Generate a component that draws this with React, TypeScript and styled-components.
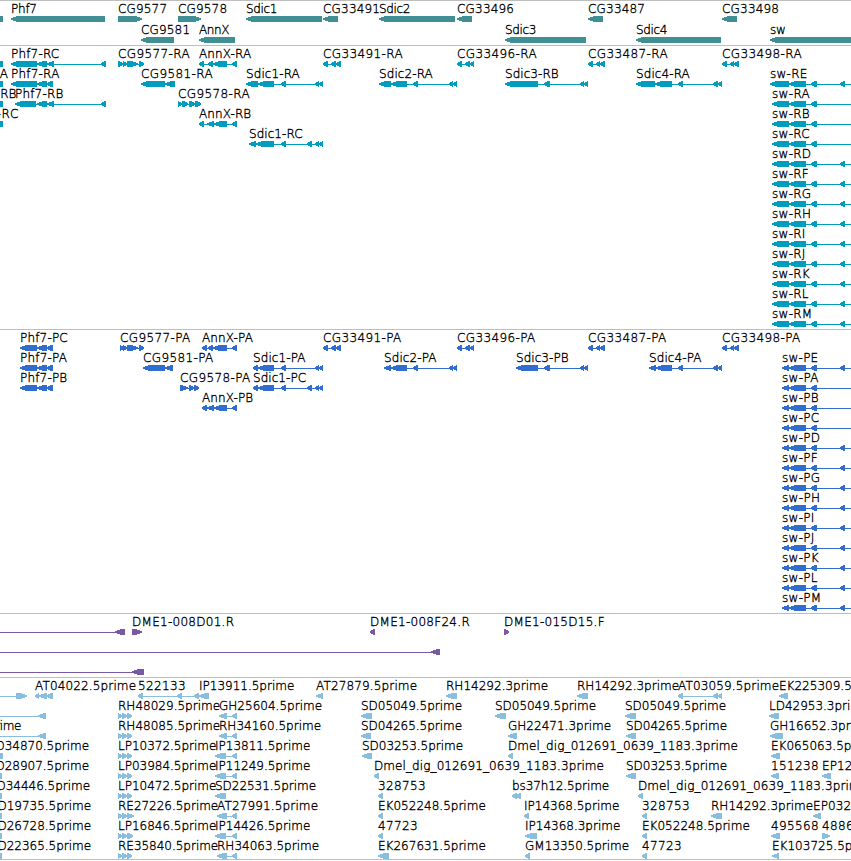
import React from "react";
import styled, { createGlobalStyle } from "styled-components";

const PageStyle = createGlobalStyle`
  html, body { margin: 0; padding: 0; background: #fff; overflow: hidden; }
`;

type Direction = "left" | "right";
type Span = [number, number];

interface Feature {
  label?: string;
  x: number;
  spans: Span[];
  dir?: Direction;
  /** x at which the label ends, for labels cut by the left edge */
  labelEnd?: number;
  lineFrom?: number;
  lineTo?: number;
}

interface TrackData {
  color: string;
  height: number;
  rowHeight: number;
  rows: Feature[][];
}

const Browser = styled.main`
  width: 851px;
  height: 861px;
  overflow: hidden;
  background: #fff;
  display: flex;
  flex-direction: column;
`;

const Track = styled.section<{ $height: number }>`
  box-sizing: border-box;
  flex: none;
  height: ${(p) => p.$height}px;
  border-top: 1px solid #bebebe;
`;

const Row = styled.div<{ $height: number }>`
  position: relative;
  height: ${(p) => p.$height}px;
`;

const Label = styled.span<{ $x: number; $end?: number; $spacing: number }>`
  position: absolute;
  top: 1px;
  ${(p) => (p.$end !== undefined ? `right: ${851 - p.$end}px;` : `left: ${p.$x}px;`)}
  font: 200 12px/15px "DejaVu Sans", sans-serif;
  letter-spacing: ${(p) => p.$spacing.toFixed(3)}px;
  -webkit-text-stroke: 0.35px #000;
  color: #000;
  white-space: nowrap;
`;

const Glyphs = styled.svg`
  position: absolute;
  left: 0;
  top: 15px;
  display: block;
`;

const f = (label: string, spans: Span[], extra: Partial<Feature> = {}): Feature => ({
  label,
  x: spans[0][0],
  spans,
  ...extra,
});
const bare = (spans: Span[], extra: Partial<Feature> = {}): Feature => ({ x: spans[0][0], spans, ...extra });
const cut = (label: string, labelEnd: number, edge: number): Feature => ({
  label,
  labelEnd,
  x: -20,
  spans: [[-20, edge]],
});
const right = { dir: "right" as Direction };

/* Width correction of each character, in pixels, averaged over a label. */
const adjustments: [RegExp, number][] = [
  [/[0-9]/, 0.37],
  [/\./, 0.19],
  [/-/, 2.67],
  [/_/, 0.6],
  [/T/, 1.6],
  [/[hndpgbcmS]/, -0.6],
  [/[fEe]/, -0.45],
  [/w/, -0.5],
  [/[il]/, -0.33],
  [/[rHA]/, 0],
];
const spacingOf = (label: string) => {
  const total = [...label].reduce((sum, ch) => {
    const hit = adjustments.find(([re]) => re.test(ch));
    return sum + (hit ? hit[1] : -0.25);
  }, 0);
  return total / label.length;
};

/* Six-pixel-high block whose head narrows in steps to a point. */
const arrow = ([a, b]: Span, dir: Direction) => {
  const k = dir === "left" ? 1 : -1;
  const tip = dir === "left" ? a : b;
  const back = dir === "left" ? b : a;
  const w = b - a;
  const outer = tip + k * Math.min(w > 6 ? 5 : 3, w - 1);
  const inner = tip + k * (w > 6 ? 2 : 1);
  return `M${back} 0H${outer}V1H${inner}V2H${tip}V4H${inner}V5H${outer}V6H${back}Z`;
};

const sdic1: Span[] = [[258, 274], [281, 286]];
const end1: Span[] = [[315, 319], [319, 323]];
const sdic2: Span[] = [[391, 407], [413, 418], [449, 453], [453, 457]];
const sdic3: Span[] = [[544, 550], [580, 584], [584, 588]];
const sdic4: Span[] = [[678, 683], [713, 718], [718, 722]];
const phf7: Span[] = [[37, 47], [47, 53]];

const cgRow = (s: string): Feature[] => [
  f(`CG33491-${s}`, [[323, 328], [331, 336], [336, 341]]),
  f(`CG33496-${s}`, [[457, 462], [465, 470], [470, 474]]),
  f(`CG33487-${s}`, [[588, 593], [596, 600], [600, 605]]),
  f(`CG33498-${s}`, [[722, 727], [730, 734], [734, 739]]),
];

const shortIsoforms = "ABC";
const sw = (suffix: string, x: number) => {
  const spans: Span[] = [[x, 789], [789, 806], [811, 817]];
  if (!shortIsoforms.includes(suffix[1])) spans.push([840, 845]);
  return f(`sw-${suffix}`, spans, { lineTo: 851 });
};
const swLetters = "BCDFGHIJKLM".split("");

const genes: TrackData = {
  color: "#3f8f95",
  height: 45,
  rowHeight: 21,
  rows: [
    [
      bare([[-20, 3]]),
      f("Phf7", [[11, 105]]),
      f("CG9577", [[118, 142]], right),
      f("CG9578", [[178, 201]], right),
      f("Sdic1", [[246, 322]]),
      f("CG33491", [[323, 338]]),
      f("Sdic2", [[379, 455]]),
      f("CG33496", [[457, 472]]),
      f("CG33487", [[588, 603]]),
      f("CG33498", [[722, 737]]),
    ],
    [
      f("CG9581", [[141, 174]]),
      f("AnnX", [[199, 235]]),
      f("Sdic3", [[505, 586]]),
      f("Sdic4", [[636, 721]]),
      f("sw", [[770, 870]]),
    ],
  ],
};

const transcripts: TrackData = {
  color: "#009dbf",
  height: 284,
  rowHeight: 20,
  rows: [
    [
      bare([[-20, 3]]),
      f("Phf7-RC", [[11, 37], [37, 47], [47, 54], [101, 106]]),
      f("CG9577-RA", [[118, 123], [123, 127], [127, 138], [139, 144]], right),
      f("AnnX-RA", [[199, 204], [208, 213], [213, 227], [232, 237]]),
      ...cgRow("RA"),
    ],
    [
      cut("A", 8, 3),
      f("Phf7-RA", [[11, 37], ...phf7]),
      f("CG9581-RA", [[141, 165], [165, 175]]),
      f("Sdic1-RA", [[246, 258], ...sdic1, ...end1]),
      f("Sdic2-RA", [[379, 391], ...sdic2]),
      f("Sdic3-RB", [[505, 538], ...sdic3]),
      f("Sdic4-RA", [[636, 655], [655, 672], ...sdic4]),
      sw("RE", 770),
    ],
    [
      cut("RB", 16, 3),
      f("Phf7-RB", [[15, 36], [37, 47], [47, 54], [101, 106]]),
      f("CG9578-RA", [[178, 182], [182, 188], [189, 195], [195, 201]], right),
      sw("RA", 772),
    ],
    [
      cut("-RC", 19, 3),
      f("AnnX-RB", [[199, 204], [207, 214], [214, 227], [232, 237]]),
      sw("RB", 772),
    ],
    [f("Sdic1-RC", [[249, 256], [256, 274], [281, 286], [307, 312], ...end1]), sw("RC", 772)],
    ...swLetters.slice(2).map((c) => [sw(`R${c}`, 772)]),
  ],
};

const proteins: TrackData = {
  color: "#316dce",
  height: 284,
  rowHeight: 20,
  rows: [
    [
      f("Phf7-PC", [[20, 37], ...phf7]),
      f("CG9577-PA", [[120, 124], [123, 127], [127, 138], [139, 144]], right),
      f("AnnX-PA", [[202, 207], [208, 213], [213, 227], [232, 237]]),
      ...cgRow("PA"),
    ],
    [
      f("Phf7-PA", [[20, 37], ...phf7]),
      f("CG9581-PA", [[143, 165], [165, 173]]),
      f("Sdic1-PA", [[253, 258], ...sdic1, ...end1]),
      f("Sdic2-PA", [[384, 391], ...sdic2]),
      f("Sdic3-PB", [[516, 538], ...sdic3]),
      f("Sdic4-PA", [[649, 656], [656, 672], ...sdic4]),
      sw("PE", 782),
    ],
    [
      f("Phf7-PB", [[20, 37], ...phf7]),
      f("CG9578-PA", [[180, 188], [189, 194], [194, 199]], right),
      f("Sdic1-PC", [[253, 258], ...sdic1, [307, 312], ...end1]),
      sw("PA", 782),
    ],
    [f("AnnX-PB", [[202, 207], [207, 214], [214, 227], [232, 237]]), sw("PB", 782)],
    ...swLetters.slice(1).map((c) => [sw(`P${c}`, 782)]),
  ],
};

const clones: TrackData = {
  color: "#7759a6",
  height: 64,
  rowHeight: 20,
  rows: [
    [
      bare([[115, 125]], { lineFrom: 0 }),
      f("DME1-008D01.R", [[132, 142]], right),
      f("DME1-008F24.R", [[370, 375]]),
      f("DME1-015D15.F", [[504, 509]], right),
    ],
    [bare([[431, 440]], { lineFrom: 0 })],
    [bare([[132, 144]], { lineFrom: 0 })],
  ],
};

const triple = (label: string, end = 132) =>
  f(label, [[118, 122], [122, 127], [127, end]], right);
const pair = (label: string, a: number, b: number) => f(label, [[a, b], [232, 237]]);
const longName = "Dmel_dig_012691_0639_1183.3prime";

const ests: TrackData = {
  color: "#8abedf",
  height: 182,
  rowHeight: 20,
  rows: [
    [
      bare([[16, 27]], { dir: "right", lineFrom: 0 }),
      f("AT04022.5prime", [[35, 39], [39, 47], [47, 53]]),
      f("522133", [[138, 143], [177, 182], [194, 199]]),
      f("IP13911.5prime", [[199, 209]]),
      f("AT27879.5prime", [[316, 323]]),
      f("RH14292.3prime", [[446, 457]]),
      f("RH14292.3prime", [[577, 588]]),
      f("AT03059.5prime", [[678, 683], [713, 718], [718, 722]]),
      f("EK225309.5prime", [[779, 788]]),
    ],
    [
      bare([[38, 46]], { lineFrom: 0 }),
      triple("RH48029.5prime"),
      pair("GH25604.5prime", 219, 227),
      f("SD05049.5prime", [[361, 372]]),
      f("SD05049.5prime", [[495, 506]]),
      f("SD05049.5prime", [[625, 636]]),
      f("LD42953.3prime", [[769, 779]]),
    ],
    [
      f("prime", [[38, 46]], { lineFrom: 0, labelEnd: 21 }),
      triple("RH48085.5prime"),
      pair("RH34160.5prime", 219, 227),
      f("SD04265.5prime", [[361, 371]]),
      f("GH22471.3prime", [[508, 517]]),
      f("SD04265.5prime", [[626, 636]]),
      f("GH16652.3prime", [[770, 783]]),
    ],
    [
      cut("SD34870.5prime", 89, 3),
      triple("LP10372.5prime"),
      pair("IP13811.5prime", 215, 226),
      f("SD03253.5prime", [[362, 372]]),
      f(longName, [[508, 513]]),
      f("EK065063.5prime", [[771, 780]]),
    ],
    [
      cut("SD28907.5prime", 89, 2),
      triple("LP03984.5prime"),
      pair("IP11249.5prime", 215, 226),
      f(longName, [[374, 379]]),
      f("SD03253.5prime", [[626, 636]]),
      f("151238", [[771, 779]]),
      f("EP1232", [[822, 831]]),
    ],
    [
      cut("SD34446.5prime", 90, 2),
      triple("LP10472.5prime"),
      f("SD22531.5prime", [[215, 226]]),
      f("328753", [[378, 383]]),
      f("bs37h12.5prime", [[512, 517], [516, 521]]),
      f(longName, [[638, 643]]),
    ],
    [
      cut("SD19735.5prime", 91, 2),
      triple("RE27226.5prime", 134),
      pair("AT27991.5prime", 217, 227),
      f("EK052248.5prime", [[378, 383]]),
      f("IP14368.5prime", [[524, 529]]),
      f("328753", [[642, 647]]),
      f("RH14292.3prime", [[711, 722]]),
      f("EP0325", [[813, 821]]),
    ],
    [
      cut("SD26728.5prime", 91, 2),
      triple("LP16846.5prime", 133),
      pair("IP14426.5prime", 215, 226),
      f("47723", [[378, 383]]),
      f("IP14368.3prime", [[525, 537]]),
      f("EK052248.5prime", [[642, 647]]),
      f("495568", [[771, 780]]),
      f("48861", [[822, 830]], right),
    ],
    [
      cut("SD22365.5prime", 91, 2),
      triple("RE35840.5prime"),
      pair("RH34063.5prime", 217, 227),
      f("EK267631.5prime", [[378, 389]]),
      f("GM13350.5prime", [[525, 530]]),
      f("47723", [[642, 647]]),
      f("EK103725.5prime", [[772, 779]]),
    ],
  ],
};

const tracks = [genes, transcripts, proteins, clones, ests];

function FeatureGlyph({ feature, color }: { feature: Feature; color: string }) {
  const { spans, dir = "left" } = feature;
  const from = feature.lineFrom ?? spans[0][0];
  const to = feature.lineTo ?? spans[spans.length - 1][1];
  return (
    <g fill={color} shapeRendering="crispEdges">
      <rect x={from} y={3} width={to - from} height={1} />
      {spans.map((s, i) => (
        <path key={i} d={arrow(s, dir)} />
      ))}
    </g>
  );
}

export default function App() {
  return (
    <>
      <PageStyle />
      <Browser>
        {tracks.map((track, t) => (
          <Track key={t} $height={track.height}>
            {track.rows.map((row, r) => (
              <Row key={r} $height={track.rowHeight}>
                <Glyphs width={851} height={6} aria-hidden="true">
                  {row.map((feature, i) => (
                    <FeatureGlyph key={i} feature={feature} color={track.color} />
                  ))}
                </Glyphs>
                {row.map(
                  (feature, i) =>
                    feature.label && (
                      <Label
                        key={i}
                        $x={feature.x}
                        $end={feature.labelEnd}
                        $spacing={spacingOf(feature.label)}
                      >
                        {feature.label}
                      </Label>
                    ),
                )}
              </Row>
            ))}
          </Track>
        ))}
        <Track $height={1} />
      </Browser>
    </>
  );
}
